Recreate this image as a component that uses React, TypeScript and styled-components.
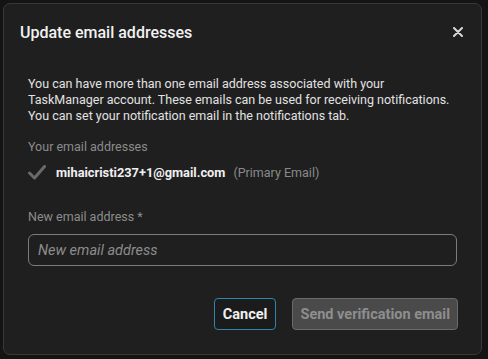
import React from "react";
import styled, { createGlobalStyle } from "styled-components";

const GlobalStyle = createGlobalStyle`
  html, body {
    margin: 0;
    padding: 0;
    background: #141414;
    font-family: Roboto, "Liberation Sans", sans-serif;
  }
`;

const Page = styled.div`
  width: 488px;
  height: 359px;
  padding: 3px 6px 4px 3px;
  box-sizing: border-box;
`;

const Dialog = styled.div`
  height: 100%;
  box-sizing: border-box;
  background: #1f1f1f;
  border: 1px solid #383838;
  border-radius: 7px;
  display: flex;
  flex-direction: column;
`;

const Header = styled.div`
  display: flex;
  justify-content: space-between;
  align-items: center;
  padding: 13px 16px 0 16px;
  height: 30px;
`;

const Title = styled.h2`
  margin: 0;
  font-size: 16px;
  font-weight: 500;
  color: #f2f2f2;
`;

const CloseButton = styled.button`
  background: none;
  border: none;
  padding: 0;
  width: 14px;
  height: 14px;
  display: flex;
  align-items: center;
  justify-content: center;
  cursor: pointer;
`;

const Body = styled.div`
  padding: 29px 24px 0 24px;
  display: flex;
  flex-direction: column;
`;

const Intro = styled.p`
  margin: 0;
  font-size: 12.5px;
  line-height: 16px;
  color: #e2e2e2;
`;

const FieldLabel = styled.div<{ $top: number }>`
  margin-top: ${(p) => p.$top}px;
  font-size: 12.5px;
  line-height: 16px;
  color: #8c8c8c;
`;

const EmailRow = styled.div`
  display: flex;
  align-items: center;
  margin-top: 8px;
  height: 18px;
`;

const Email = styled.span`
  margin-left: 10px;
  font-size: 12.8px;
  font-weight: 700;
  color: #f0f0f0;
`;

const Primary = styled.span`
  margin-left: 8px;
  font-size: 12.5px;
  color: #8a8a8a;
`;

const Input = styled.input`
  margin-top: 9px;
  height: 32px;
  box-sizing: border-box;
  width: 100%;
  background: transparent;
  border: 1px solid #7c7c7c;
  border-radius: 6px;
  padding: 0 9px;
  font-family: inherit;
  font-size: 14.5px;
  color: #eee;
  outline: none;
  &::placeholder {
    color: #8c8c8c;
    font-style: italic;
  }
`;

const Footer = styled.div`
  display: flex;
  justify-content: flex-end;
  gap: 16px;
  padding: 32px 23px 0 0;
`;

const Button = styled.button<{ $variant: "outline" | "disabled" }>`
  height: 32px;
  box-sizing: border-box;
  border-radius: 4px;
  font-family: inherit;
  font-size: 14.5px;
  font-weight: 700;
  padding: 0 ${(p) => (p.$variant === "outline" ? 8 : 7)}px;
  border: 1px solid ${(p) => (p.$variant === "outline" ? "#2f86ad" : "#6a6a6a")};
  background: ${(p) => (p.$variant === "outline" ? "#1b1b1b" : "#4a4a4a")};
  color: ${(p) => (p.$variant === "outline" ? "#f0f0f0" : "#8e8e8e")};
  cursor: pointer;
`;

export default function App() {
  return (
    <>
      <GlobalStyle />
      <Page>
        <Dialog>
          <Header>
            <Title>Update email addresses</Title>
            <CloseButton aria-label="Close">
              <svg width="10" height="10" viewBox="0 0 10 10">
                <path d="M1 1L9 9M9 1L1 9" stroke="#d8d8d8" strokeWidth="2" strokeLinecap="round" />
              </svg>
            </CloseButton>
          </Header>
          <Body>
            <Intro>
              You can have more than one email address associated with your TaskManager account. These emails can be
              used for receiving notifications. You can set your notification email in the notifications tab.
            </Intro>
            <FieldLabel $top={15}>Your email addresses</FieldLabel>
            <EmailRow>
              <svg width="18" height="15" viewBox="0 0 18 15">
                <path d="M1.5 8L6.5 13L16.5 1.5" fill="none" stroke="#6a6a6a" strokeWidth="3" strokeLinecap="round" strokeLinejoin="round" />
              </svg>
              <Email>mihaicristi237+1@gmail.com</Email>
              <Primary>(Primary Email)</Primary>
            </EmailRow>
            <FieldLabel $top={28}>New email address *</FieldLabel>
            <Input placeholder="New email address" />
          </Body>
          <Footer>
            <Button $variant="outline">Cancel</Button>
            <Button $variant="disabled">Send verification email</Button>
          </Footer>
        </Dialog>
      </Page>
    </>
  );
}
